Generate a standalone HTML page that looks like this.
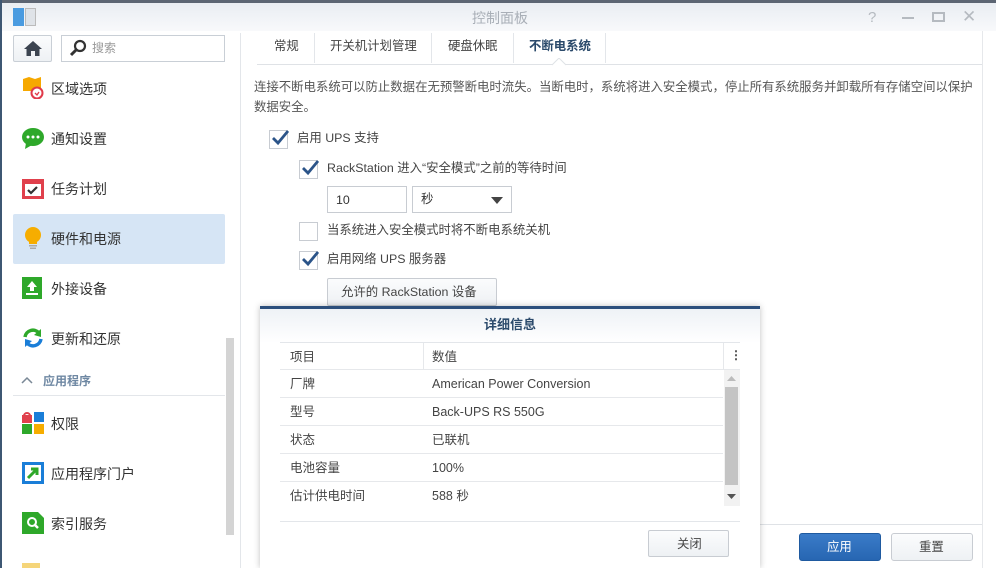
<!DOCTYPE html>
<html><head><meta charset="utf-8"><style>
*{margin:0;padding:0;box-sizing:border-box}
body{width:996px;height:568px;overflow:hidden;background:#fff;font-family:"Liberation Sans","Noto Sans CJK SC",sans-serif;font-size:13px;color:#444;position:relative}
.a{position:absolute}
.t{position:absolute;white-space:nowrap;line-height:1}
.cb{position:absolute;width:19px;height:19px;border:1px solid #c8ccd2;background:#fff}
.cb svg{position:absolute;left:1px;top:-3px}
.mi{position:absolute;left:13px;width:212px;height:50px}
.mi .t{left:38px;top:18px;font-size:14px;color:#333}
.mi .ic{position:absolute;left:9px;top:13px;width:22px;height:22px}
.row{position:absolute;left:280px;width:443px;height:28px;border-bottom:1px solid #e6e8eb}
.row .t{top:8px;font-size:12.5px;color:#444}
.c{font-size:12.4px}
</style></head><body>
<div class="a" style="left:0;top:0;width:996px;height:3px;background:#5c6573"></div>
<div class="a" style="left:0;top:3px;width:996px;height:28px;background:linear-gradient(#e9edf2,#f8f9fb)"></div>
<div class="a" style="left:0;top:0;width:2px;height:568px;background:#3e5773"></div>
<div class="a" style="left:13px;top:8px;width:11px;height:18px;background:#4a9be0"></div>
<div class="a" style="left:25px;top:8px;width:11px;height:18px;background:#dfe3e8;border:1px solid #bbb"></div>
<div class="t" style="left:472px;top:11px;font-size:14px;color:#a9afb7">控制面板</div>
<div class="t" style="left:868px;top:10px;font-size:15px;color:#b5bac0">?</div>
<div class="a" style="left:902px;top:17px;width:12px;height:2px;background:#b5bac0"></div>
<div class="a" style="left:932px;top:12px;width:13px;height:10px;border:2px solid #b5bac0"></div>
<div class="t" style="left:962px;top:8px;font-size:17px;color:#b5bac0">✕</div>
<div class="a" style="left:240px;top:33px;width:1px;height:535px;background:#e3e6ea"></div>
<div class="a" style="left:13px;top:35px;width:39px;height:27px;border:1px solid #c9cfd6;border-radius:2px;background:linear-gradient(#fbfcfd,#eef1f4)"></div>
<svg class="a" style="left:23px;top:40px" width="20" height="17" viewBox="0 0 20 17"><path d="M10 1 L1 9 L3.5 9 L3.5 16 L8 16 L8 11 L12 11 L12 16 L16.5 16 L16.5 9 L19 9Z" fill="#3c4450"/></svg>
<div class="a" style="left:61px;top:35px;width:164px;height:27px;border:1px solid #c9cfd6"></div>
<svg class="a" style="left:69px;top:39px" width="18" height="18"><circle cx="11" cy="7" r="5" stroke="#333" stroke-width="2.2" fill="none"/><path d="M7 11 L2 16" stroke="#333" stroke-width="3"/></svg>
<div class="t" style="left:92px;top:42px;font-size:12px;color:#999">搜索</div>

<div class="mi" style="top:64px"><svg class="ic" viewBox="0 0 22 22" width="22" height="22"><path d="M1 2 L7 0 L13 2 L19 0 L19 14 L1 14Z" fill="#f6a800"/><circle cx="15" cy="16" r="5.5" fill="#fff" stroke="#e03a4a" stroke-width="2"/><path d="M13 16 L15 18 L17 15" stroke="#e03a4a" stroke-width="1.3" fill="none"/></svg><div class="t">区域选项</div></div>
<div class="mi" style="top:114px"><svg class="ic" viewBox="0 0 22 22" width="22" height="22"><ellipse cx="11" cy="10" rx="11" ry="9" fill="#2ea82a"/><path d="M4 16 L3 22 L10 18Z" fill="#2ea82a"/><circle cx="6" cy="10" r="1.5" fill="#fff"/><circle cx="11" cy="10" r="1.5" fill="#fff"/><circle cx="16" cy="10" r="1.5" fill="#fff"/></svg><div class="t">通知设置</div></div>
<div class="mi" style="top:164px"><svg class="ic" viewBox="0 0 22 22" width="22" height="22"><rect x="0" y="2" width="22" height="20" fill="#e0404c"/><rect x="3" y="7" width="16" height="12" fill="#fff"/><path d="M6 13 L9 16 L15 10" stroke="#333" stroke-width="2.2" fill="none"/></svg><div class="t">任务计划</div></div>
<div class="mi" style="top:214px;background:#d6e5f5;border-radius:2px"><svg class="ic" viewBox="0 0 22 22" width="22" height="22"><circle cx="11" cy="8" r="8" fill="#f6ad00"/><rect x="7" y="14" width="8" height="3" fill="#f6ad00"/><rect x="7" y="18" width="8" height="1.5" fill="#aaa"/><rect x="8" y="20.5" width="6" height="1.5" fill="#aaa"/></svg><div class="t">硬件和电源</div></div>
<div class="mi" style="top:264px"><svg class="ic" viewBox="0 0 22 22" width="22" height="22"><rect x="0" y="0" width="20" height="22" fill="#2ea82a"/><path d="M10 4 L15 10 L12 10 L12 14 L8 14 L8 10 L5 10Z" fill="#fff"/><rect x="4" y="16" width="12" height="2" fill="#fff"/></svg><div class="t">外接设备</div></div>
<div class="mi" style="top:314px"><svg class="ic" viewBox="0 0 22 22" width="22" height="22"><path d="M3 10 A8 8 0 0 1 17 6" stroke="#2ea82a" stroke-width="3.5" fill="none"/><path d="M19 2 L19 10 L12 8Z" fill="#2ea82a"/><path d="M19 12 A8 8 0 0 1 5 16" stroke="#1a7ed8" stroke-width="3.5" fill="none"/><path d="M3 20 L3 12 L10 14Z" fill="#1a7ed8"/></svg><div class="t">更新和还原</div></div>
<svg class="a" style="left:21px;top:376px" width="12" height="8"><path d="M1 7 L6 2 L11 7" stroke="#7a8896" stroke-width="1.5" fill="none"/></svg>
<div class="t" style="left:43px;top:375px;font-size:12px;color:#6f88a3;font-weight:bold">应用程序</div>
<div class="a" style="left:13px;top:395px;width:212px;height:1px;background:#e3e6ea"></div>
<div class="mi" style="top:399px"><svg class="ic" viewBox="0 0 22 22" width="22" height="22"><rect x="0" y="3" width="10" height="8" fill="#e0404c"/><path d="M2 4 A3 3 0 0 1 8 4" stroke="#e0404c" stroke-width="2" fill="none"/><rect x="12" y="0" width="10" height="10" fill="#1a7ed8"/><rect x="0" y="12" width="10" height="10" fill="#2ea82a"/><rect x="12" y="12" width="10" height="10" fill="#f6ad00"/></svg><div class="t">权限</div></div>
<div class="mi" style="top:449px"><svg class="ic" viewBox="0 0 22 22" width="22" height="22"><rect x="0" y="0" width="22" height="22" fill="#1a7ed8"/><rect x="3" y="3" width="16" height="16" fill="#fff"/><path d="M6 16 L14 8 M9 7 L15 7 L15 13" stroke="#2ea82a" stroke-width="3" fill="none"/></svg><div class="t">应用程序门户</div></div>
<div class="mi" style="top:499px"><svg class="ic" viewBox="0 0 22 22" width="22" height="22"><path d="M0 0 L16 0 L22 6 L22 22 L0 22Z" fill="#2ea82a"/><circle cx="10" cy="10" r="4" stroke="#fff" stroke-width="2" fill="none"/><path d="M13 13 L16 16" stroke="#fff" stroke-width="2.5"/></svg><div class="t">索引服务</div></div>
<div class="a" style="left:22px;top:563px;width:18px;height:5px;background:#f5d57a"></div>
<div class="a" style="left:226px;top:338px;width:8px;height:197px;background:#d4d4d4"></div>

<div class="a" style="left:257px;top:64px;width:725px;height:1px;background:#dfe2e6"></div>
<div class="a" style="left:982px;top:31px;width:1px;height:537px;background:#e6e8eb"></div>
<div class="t c" style="left:274px;top:40px;color:#444">常规</div>
<div class="a" style="left:314px;top:33px;width:1px;height:30px;background:#e3e6ea"></div>
<div class="t c" style="left:330px;top:40px;color:#444">开关机计划管理</div>
<div class="a" style="left:431px;top:33px;width:1px;height:30px;background:#e3e6ea"></div>
<div class="t c" style="left:448px;top:40px;color:#444">硬盘休眠</div>
<div class="a" style="left:513px;top:33px;width:1px;height:30px;background:#e3e6ea"></div>
<div class="t c" style="left:529px;top:40px;color:#2b4a6b;font-weight:bold">不断电系统</div>
<div class="a" style="left:605px;top:33px;width:1px;height:30px;background:#e3e6ea"></div>
<svg class="a" style="left:552px;top:58px" width="14" height="8"><path d="M0 7 L7 0 L14 7" fill="#fff" stroke="#dfe2e6"/></svg>

<div class="t c" style="left:254px;top:81px;color:#555">连接不断电系统可以防止数据在无预警断电时流失。当断电时，系统将进入安全模式，停止所有系统服务并卸载所有存储空间以保护</div>
<div class="t c" style="left:254px;top:101px;color:#555">数据安全。</div>

<div class="cb" style="left:269px;top:130px"><svg width="20" height="20"><path d="M2 10 L7 15 L17 3" stroke="#2b5489" stroke-width="2.8" fill="none"/></svg></div>
<div class="t c" style="left:297px;top:132px;color:#444">启用 UPS 支持</div>
<div class="cb" style="left:299px;top:160px"><svg width="20" height="20"><path d="M2 10 L7 15 L17 3" stroke="#2b5489" stroke-width="2.8" fill="none"/></svg></div>
<div class="t c" style="left:327px;top:162px;color:#444">RackStation 进入“安全模式”之前的等待时间</div>
<div class="a" style="left:327px;top:186px;width:80px;height:27px;border:1px solid #c8ccd2"></div>
<div class="t c" style="left:336px;top:194px;color:#333">10</div>
<div class="a" style="left:412px;top:186px;width:100px;height:27px;border:1px solid #c8ccd2"></div>
<div class="t c" style="left:421px;top:193px;color:#333">秒</div>
<svg class="a" style="left:491px;top:197px" width="12" height="7"><path d="M0 0 L12 0 L6 7Z" fill="#444"/></svg>
<div class="cb" style="left:299px;top:222px"></div>
<div class="t c" style="left:327px;top:224px;color:#444">当系统进入安全模式时将不断电系统关机</div>
<div class="cb" style="left:299px;top:251px"><svg width="20" height="20"><path d="M2 10 L7 15 L17 3" stroke="#2b5489" stroke-width="2.8" fill="none"/></svg></div>
<div class="t c" style="left:327px;top:253px;color:#444">启用网络 UPS 服务器</div>
<div class="a" style="left:327px;top:278px;width:170px;height:28px;border:1px solid #c8ccd2;border-radius:2px;background:linear-gradient(#fbfcfd,#eef1f4)"></div>
<div class="t c" style="left:341px;top:286px;color:#444">允许的 RackStation 设备</div>

<div class="a" style="left:760px;top:524px;width:222px;height:1px;background:#dfe2e6"></div>
<div class="a" style="left:799px;top:533px;width:82px;height:28px;border:1px solid #1f5aa0;border-radius:3px;background:linear-gradient(#3a7bc8,#2766b2)"></div>
<div class="t c" style="left:827px;top:541px;color:#fff">应用</div>
<div class="a" style="left:891px;top:533px;width:82px;height:28px;border:1px solid #c8ccd2;border-radius:3px;background:linear-gradient(#fbfcfd,#eef1f4)"></div>
<div class="t c" style="left:919px;top:541px;color:#444">重置</div>

<div class="a" style="left:260px;top:306px;width:500px;height:262px;background:#fff;box-shadow:0 0 6px rgba(0,0,0,.25)"></div>
<div class="a" style="left:260px;top:306px;width:500px;height:3px;background:#2c4f7c"></div>
<div class="a" style="left:260px;top:309px;width:500px;height:34px;background:linear-gradient(#eef2f6,#fff)"></div>
<div class="t" style="left:484px;top:318px;font-size:13px;color:#2b4a6b;font-weight:bold">详细信息</div>
<div class="a" style="left:280px;top:342px;width:460px;height:1px;background:#e3e6ea"></div>
<div class="row" style="top:343px;width:460px;height:27px"><div class="t" style="left:10px;color:#444">项目</div><div class="t" style="left:152px">数值</div></div>
<div class="a" style="left:423px;top:343px;width:1px;height:26px;background:#e6e8eb"></div>
<div class="a" style="left:723px;top:343px;width:1px;height:26px;background:#e6e8eb"></div>
<div class="t" style="left:730px;top:349px;font-size:12px;color:#444;font-weight:bold">⋮</div>
<div class="row" style="top:370px"><div class="t" style="left:10px">厂牌</div><div class="t" style="left:152px">American Power Conversion</div></div>
<div class="row" style="top:398px"><div class="t" style="left:10px">型号</div><div class="t" style="left:152px">Back-UPS RS 550G</div></div>
<div class="row" style="top:426px"><div class="t" style="left:10px">状态</div><div class="t" style="left:152px">已联机</div></div>
<div class="row" style="top:454px"><div class="t" style="left:10px">电池容量</div><div class="t" style="left:152px">100%</div></div>
<div class="row" style="top:482px;border:none"><div class="t" style="left:10px">估计供电时间</div><div class="t" style="left:152px">588 秒</div></div>
<div class="a" style="left:724px;top:370px;width:16px;height:136px;background:#f2f2f2"></div>
<div class="a" style="left:725px;top:387px;width:13px;height:98px;background:#c4c4c4"></div>
<svg class="a" style="left:727px;top:376px" width="9" height="5"><path d="M0 5 L4.5 0 L9 5Z" fill="#bbb"/></svg>
<svg class="a" style="left:727px;top:494px" width="9" height="5"><path d="M0 0 L4.5 5 L9 0Z" fill="#555"/></svg>
<div class="a" style="left:280px;top:521px;width:460px;height:1px;background:#e3e6ea"></div>
<div class="a" style="left:648px;top:530px;width:81px;height:27px;border:1px solid #c8ccd2;border-radius:2px;background:linear-gradient(#fbfcfd,#eef1f4)"></div>
<div class="t c" style="left:677px;top:538px;color:#444">关闭</div>
</body></html>
